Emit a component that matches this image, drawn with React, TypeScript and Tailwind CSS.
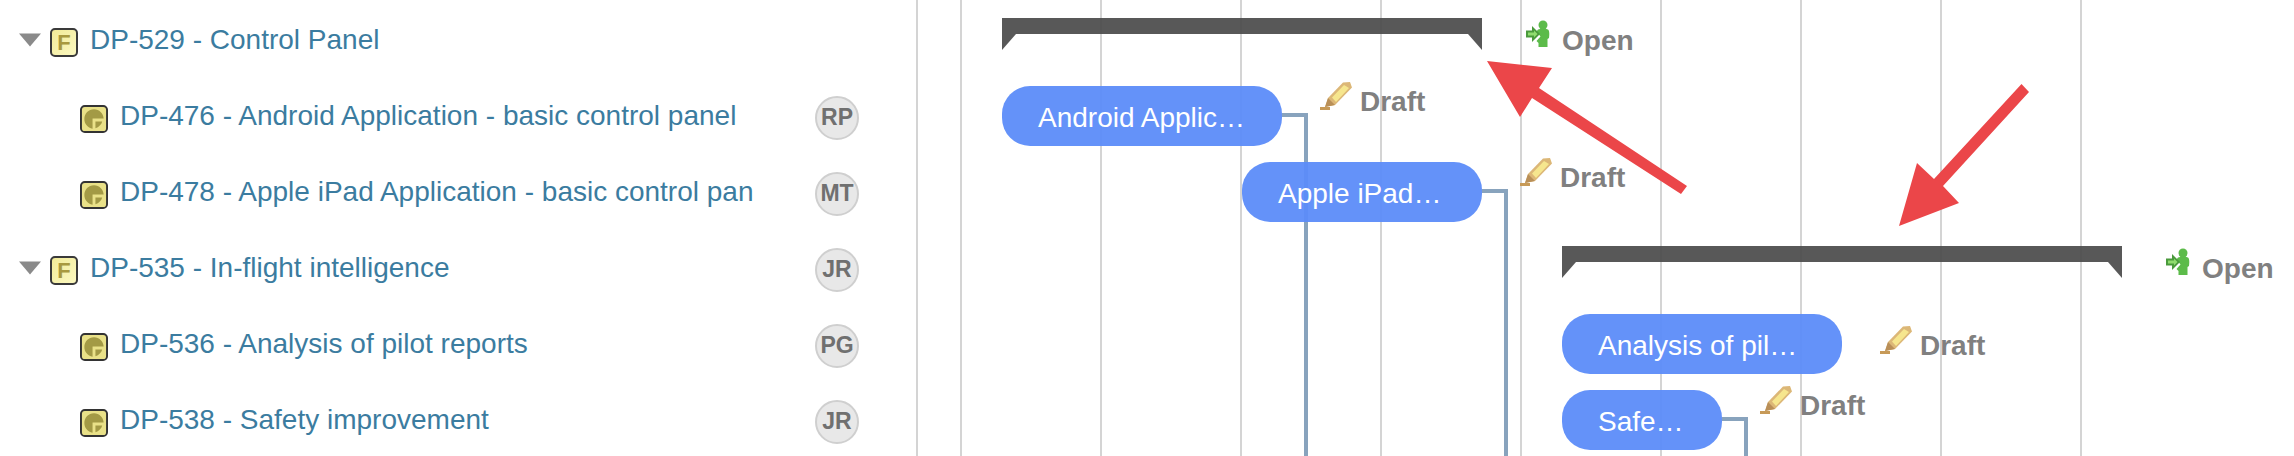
const rows = [
  { kind: 'feature', label: 'DP-529 - Control Panel' },
  { kind: 'task', label: 'DP-476 - Android Application - basic control panel', who: 'RP' },
  { kind: 'task', label: 'DP-478 - Apple iPad Application - basic control pan', who: 'MT' },
  { kind: 'feature', label: 'DP-535 - In-flight intelligence', who: 'JR' },
  { kind: 'task', label: 'DP-536 - Analysis of pilot reports', who: 'PG' },
  { kind: 'task', label: 'DP-538 - Safety improvement', who: 'JR' },
]

function Caret() {
  return (
    <svg width="22" height="14" viewBox="0 0 22 14" className="shrink-0 blur-[0.4px]">
      <path d="M0 0.5h22L11 13.500z" fill="#8a8a8a" />
    </svg>
  )
}

function FeatureIcon() {
  return (
    <div className="w-[28px] h-[29px] shrink-0 rounded-[5px] border-2 border-[#3a3a3a] bg-gradient-to-br from-[#f2eb98] to-[#fbf8c0] flex items-center justify-center text-[22px] leading-none font-bold text-[#a8993f]">
      F
    </div>
  )
}

function TaskIcon() {
  return (
    <svg width="28" height="28" viewBox="0 0 29 29" className="shrink-0 mt-[5px]">
      <rect x="1" y="1" width="27" height="27" rx="4" fill="#e9e188" stroke="#333" strokeWidth="2" />
      <path d="M14.500 4.500C8.800 4.500 4.500 9 4.500 14.500c0 5 3.500 9 8.500 10V14h11.500C24 8.800 20 4.500 14.500 4.500z" fill="#a39a45" />
      <path d="M16 17h7c-.8 3-3.500 6-7 7z" fill="#a39a45" />
    </svg>
  )
}

function Pencil() {
  return (
    <svg width="32" height="28" viewBox="0 0 32 28">
      <path d="M0 26.500h10" stroke="#c79a58" strokeWidth="3" />
      <path d="M23 .5L30 0l2 5.500L15 23l-10 2 3-9z" fill="#dcb777" />
      <path d="M12 15.500L24 3l5 3L16 20z" fill="#f6e68e" />
      <path d="M5 25l3-9 7 7z" fill="#b98f58" />
    </svg>
  )
}

function OpenIcon() {
  return (
    <svg width="24" height="28" viewBox="0 0 24 28">
      <circle cx="17" cy="5" r="4.500" fill="#5cbb4a" />
      <path d="M12 9.500c3-1.500 8-1.500 10 0 1.500 1 1.500 5 1 8.500l-1.500 1v8h-9v-4l-2-2 4-4.500-4-5z" fill="#5cbb4a" />
      <path d="M0 10.500h6V6l8 8-8 8v-4.500H0z" fill="#4a9a3c" />
      <path d="M2 12.500h6V10.500l3.500 3.500L8 17.500v-2H2z" fill="#8fdc6e" />
    </svg>
  )
}

function Draft({ className }: { className: string }) {
  return (
    <div className={`absolute flex items-start gap-2 ${className}`}>
      <Pencil />
      <span className="text-[28px] leading-[32px] font-bold text-[#808080] mt-[4px]">Draft</span>
    </div>
  )
}

function Open({ className }: { className: string }) {
  return (
    <div className={`absolute flex items-start gap-3 ${className}`}>
      <OpenIcon />
      <span className="text-[28px] leading-[32px] font-bold text-[#808080] mt-[5px]">Open</span>
    </div>
  )
}

function Bar({ label, className }: { label: string; className: string }) {
  return (
    <div className={`absolute h-[60px] rounded-[28px] bg-[#5c8cf9]/95 pl-9 flex items-center text-[28px] text-white ${className}`}>
      <span className="mt-[4px]">{label}</span>
    </div>
  )
}

function Summary({ width, className }: { width: number; className: string }) {
  return (
    <svg width={width} height="32" viewBox={`0 0 ${width} 32`} className={`absolute ${className}`}>
      <path d={`M0 0H${width}V32L${width - 14} 16H14L0 32z`} fill="#4a4a4a" fillOpacity="0.92" />
    </svg>
  )
}

export default function App() {
  return (
    <div className="flex w-[2294px] h-[456px] overflow-hidden bg-white font-['Liberation_Sans',Arial,sans-serif]">
      {/* Tree */}
      <div className="w-[918px] shrink-0 pt-[2px] border-r-2 border-[#d4d4d4]">
        {rows.map((row) => (
          <div key={row.label} className={`flex items-center h-[76px] ${row.kind === 'task' ? 'pl-[80px] gap-[12px]' : 'pl-[19px]'}`}>
            {row.kind === 'feature' && <Caret />}
            {row.kind === 'feature' ? <div className="ml-[9px] mr-[12px] mt-[5px]"><FeatureIcon /></div> : <TaskIcon />}
            <span className={`text-[28px] leading-[32px] text-[#3b7ca0] whitespace-nowrap shrink-0 ${row.kind === 'task' ? 'w-[637px]' : 'w-[667px]'}`}>
              {row.label}
            </span>
            {row.who && (
              <div className={`${row.kind === 'task' ? 'ml-[46px]' : 'ml-[58px]'} mt-[3px] w-[44px] h-[44px] shrink-0 rounded-full border-2 border-[#cfcfcf] bg-[#e8e8e8] flex items-center justify-center text-[23px] font-bold text-[#707070]`}>
                {row.who}
              </div>
            )}
          </div>
        ))}
      </div>

      {/* Timeline */}
      <div className="relative flex-1">
        <div className="flex h-full pl-[42px]">
          {[0, 1, 2, 3, 4, 5, 6, 7, 8].map((i) => (
            <div key={i} className="w-[140px] shrink-0 border-l-2 border-[#d4d4d4]" />
          ))}
        </div>

        <svg width="1376" height="456" className="absolute inset-0">
          <path d="M364 115H388V456" fill="none" stroke="#88a3bd" strokeWidth="4" />
          <path d="M564 191H588V456" fill="none" stroke="#88a3bd" strokeWidth="4" />
          <path d="M804 419H828V456" fill="none" stroke="#88a3bd" strokeWidth="4" />
        </svg>

        <Summary width={480} className="left-[84px] top-[18px]" />
        <Summary width={560} className="left-[644px] top-[246px]" />

        <Bar label="Android Applic…" className="left-[84px] top-[86px] w-[280px]" />
        <Bar label="Apple iPad…" className="left-[324px] top-[162px] w-[240px]" />
        <Bar label="Analysis of pil…" className="left-[644px] top-[314px] w-[280px]" />
        <Bar label="Safe…" className="left-[644px] top-[390px] w-[160px]" />

        <Open className="left-[608px] top-[20px]" />
        <Open className="left-[1248px] top-[248px]" />
        <Draft className="left-[402px] top-[82px]" />
        <Draft className="left-[602px] top-[158px]" />
        <Draft className="left-[962px] top-[326px]" />
        <Draft className="left-[842px] top-[386px]" />

        <svg width="1376" height="456" className="absolute inset-0">
          <path d="M569 61L634 68L621 88L769 186L763 194L614 98L602 117z" fill="#eb4649" />
          <path d="M1111 92L1025 186L1041 203L981 226L999 163L1016 179L1103.500 84z" fill="#eb4649" />
        </svg>
      </div>
    </div>
  )
}
